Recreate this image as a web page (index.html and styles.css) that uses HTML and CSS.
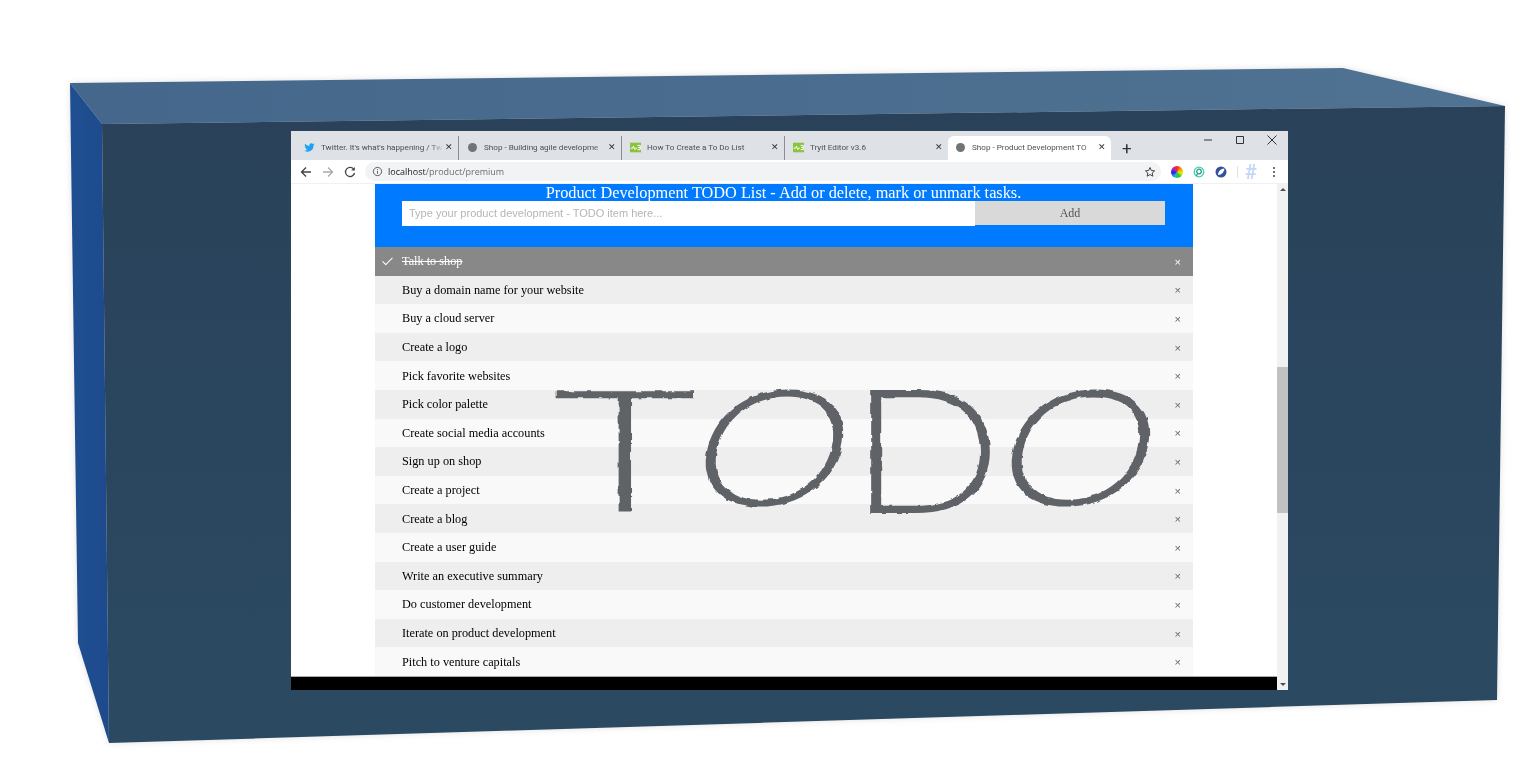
FILE: index.html
```html
<!DOCTYPE html>
<html>
<head>
    <title>Shop - Product Development TODO List</title>
    <link rel="stylesheet" href="styles.css">
</head>
<body>
    <svg class="box" width="1536" height="768" viewBox="0 0 1536 768">
        <defs>
            <linearGradient id="topFace" x1="0" y1="0" x2="1" y2="0">
                <stop offset="0" stop-color="#44678b"/>
                <stop offset="1" stop-color="#507393"/>
            </linearGradient>
            <linearGradient id="sideFace" x1="0" y1="0" x2="1" y2="0">
                <stop offset="0" stop-color="#1f4f92"/>
                <stop offset="1" stop-color="#1d4a8c"/>
            </linearGradient>
            <linearGradient id="frontFace" x1="0" y1="0" x2="0" y2="1">
                <stop offset="0" stop-color="#29425a"/>
                <stop offset="1" stop-color="#2b4a62"/>
            </linearGradient>
            <filter id="rough" x="-10%" y="-10%" width="120%" height="120%">
                <feTurbulence type="fractalNoise" baseFrequency="0.1" numOctaves="2" seed="4"/>
                <feDisplacementMap in="SourceGraphic" scale="4" xChannelSelector="R" yChannelSelector="G"/>
            </filter>
        </defs>
        <polygon points="70,83 1343,68 1505,106 102,124" fill="url(#topFace)"/>
        <polygon points="70,83 102,124 109,743 78,643" fill="url(#sideFace)"/>
        <polygon points="102,124 1505,106 1497,700 109,743" fill="url(#frontFace)"/>
    </svg>

    <div class="window">
        <div class="tabstrip">
            <div class="tab">
                <svg class="favicon" viewBox="0 0 24 24"><path fill="#1da1f2" d="M23 5c-.8.4-1.700.6-2.600.7.900-.6 1.700-1.400 2-2.500-.900.500-1.900.9-2.900 1.100a4.600 4.600 0 0 0-7.900 4.200C7.800 8.300 4.500 6.500 2.200 3.700a4.600 4.600 0 0 0 1.400 6.100c-.7 0-1.400-.2-2-.6 0 2.200 1.600 4.100 3.700 4.600-.7.200-1.400.2-2.100.1.600 1.900 2.300 3.200 4.300 3.200A9.300 9.300 0 0 1 .7 19a13 13 0 0 0 20-11.500c.900-.7 1.700-1.500 2.300-2.500z"/></svg>
                <span class="tab-title">Twitter. It's what's happening / Tw</span>
                <span class="tab-close">✕</span>
            </div>
            <div class="tab">
                <span class="favicon dot"></span>
                <span class="tab-title">Shop - Building agile developme</span>
                <span class="tab-close">✕</span>
            </div>
            <div class="tab">
                <svg class="favicon" viewBox="0 0 16 16"><rect width="16" height="14" y="1" fill="#8ac33e"/><path fill="none" stroke="#fff" stroke-width="1.400" d="M1 9h3l1-3 2 5 1-2h2M11 5h4v3h-3 3v3h-4"/></svg>
                <span class="tab-title">How To Create a To Do List</span>
                <span class="tab-close">✕</span>
            </div>
            <div class="tab">
                <svg class="favicon" viewBox="0 0 16 16"><rect width="16" height="14" y="1" fill="#8ac33e"/><path fill="none" stroke="#fff" stroke-width="1.400" d="M1 9h3l1-3 2 5 1-2h2M11 5h4v3h-3 3v3h-4"/></svg>
                <span class="tab-title">Tryit Editor v3.6</span>
                <span class="tab-close">✕</span>
            </div>
            <div class="tab active">
                <span class="favicon dot"></span>
                <span class="tab-title">Shop - Product Development TO</span>
                <span class="tab-close">✕</span>
            </div>
            <span class="new-tab">+</span>
            <div class="window-controls">
                <svg width="12" height="12" viewBox="0 0 12 12"><path d="M2 6h8" stroke="#333" fill="none"/></svg>
                <svg width="12" height="12" viewBox="0 0 12 12"><path d="M2.500 2.500h7v7h-7z" stroke="#333" fill="none"/></svg>
                <svg width="12" height="12" viewBox="0 0 12 12"><path d="M1.500 1.500l9 9M10.500 1.500l-9 9" stroke="#333" fill="none"/></svg>
            </div>
        </div>

        <div class="toolbar">
            <svg class="nav" viewBox="0 0 12 12"><path d="M11 6H1.500M6 1.500L1.500 6 6 10.500" fill="none" stroke="#444" stroke-width="1.300"/></svg>
            <svg class="nav" viewBox="0 0 12 12"><path d="M1 6h9.500M6 1.500L10.500 6 6 10.500" fill="none" stroke="#aaa" stroke-width="1.300"/></svg>
            <svg class="nav" viewBox="0 0 12 12"><path d="M10 3.500A4.600 4.600 0 1 0 10.600 7" fill="none" stroke="#444" stroke-width="1.300"/><path d="M10.800 1v3.600H7.200z" fill="#444"/></svg>
            <div class="omnibox">
                <svg class="info" viewBox="0 0 12 12"><circle cx="6" cy="6" r="4.500" fill="none" stroke="#555"/><path d="M6 5.300v3.200M6 3.400v1" stroke="#555"/></svg>
                <span class="url"><b>localhost</b>/product/premium</span>
                <svg class="star" viewBox="0 0 24 24"><path d="M12 3l2.700 6 6.500.7-4.900 4.300 1.400 6.400L12 17.100l-5.700 3.300 1.400-6.400L2.800 9.700 9.300 9z" fill="none" stroke="#444" stroke-width="2"/></svg>
            </div>
            <div class="extensions">
                <span class="ext wheel"></span>
                <svg class="ext" viewBox="0 0 12 12"><circle cx="6" cy="6" r="4.800" fill="none" stroke="#35cfa8" stroke-width="1.200"/><circle cx="6" cy="5.500" r="2.300" fill="none" stroke="#1d9a80" stroke-width="1.200"/><path d="M4.500 7.500L3.500 10" stroke="#1d9a80" stroke-width="1.200"/></svg>
                <svg class="ext" viewBox="0 0 12 12"><circle cx="6" cy="6" r="5.500" fill="#34529c"/><path d="M3 9c0-3 2-6 6.500-6.500C9 6 7 9 3 9z" fill="#fff"/></svg>
                <span class="ext-sep"></span>
                <span class="hash">#</span>
                <svg class="kebab" viewBox="0 0 4 12"><circle cx="2" cy="2" r="1" fill="#444"/><circle cx="2" cy="6" r="1" fill="#444"/><circle cx="2" cy="10" r="1" fill="#444"/></svg>
            </div>
        </div>

        <div class="viewport">
            <div class="page">
                <div class="container">
                    <div class="header">
                        <div class="heading">Product Development TODO List - Add or delete, mark or unmark tasks.</div>
                        <div class="add-row">
                            <div class="todo-input">Type your product development - TODO item here...</div>
                            <div class="add-btn">Add</div>
                        </div>
                    </div>
                    <ul class="todo-list">
                        <li class="checked"><span class="done">Talk to shop</span><span class="close">×</span></li>
                        <li>Buy a domain name for your website<span class="close">×</span></li>
                        <li>Buy a cloud server<span class="close">×</span></li>
                        <li>Create a logo<span class="close">×</span></li>
                        <li>Pick favorite websites<span class="close">×</span></li>
                        <li>Pick color palette<span class="close">×</span></li>
                        <li>Create social media accounts<span class="close">×</span></li>
                        <li>Sign up on shop<span class="close">×</span></li>
                        <li>Create a project<span class="close">×</span></li>
                        <li>Create a blog<span class="close">×</span></li>
                        <li>Create a user guide<span class="close">×</span></li>
                        <li>Write an executive summary<span class="close">×</span></li>
                        <li>Do customer development<span class="close">×</span></li>
                        <li>Iterate on product development<span class="close">×</span></li>
                        <li>Pitch to venture capitals<span class="close">×</span></li>
                    </ul>
                </div>
                <div class="black-bar"></div>
            </div>
            <div class="scrollbar">
                <span class="arrow up"></span>
                <div class="track"><div class="thumb"></div></div>
                <span class="arrow down"></span>
            </div>
        </div>
    </div>

    <div class="scrawl">
        <span class="letter t">T</span>
        <span class="letter o1">O</span>
        <span class="letter d">D</span>
        <span class="letter o2">O</span>
    </div>
</body>
</html>
```

FILE: styles.css
```css
html, body {
    margin: 0;
    height: 768px;
    overflow: hidden;
    background: #fff;
}
.box {
    position: absolute;
    left: 0;
    top: 0;
    filter: drop-shadow(0 0 3px rgba(0, 0, 0, 0.12));
}
.window {
    position: absolute;
    left: 291px;
    top: 131px;
    width: 997px;
    height: 559px;
    display: flex;
    flex-direction: column;
    background: #fff;
    font-family: Roboto, sans-serif;
    filter: blur(0.35px);
}
.tabstrip {
    height: 29px;
    padding-left: 5px;
    display: flex;
    align-items: flex-end;
    background: #dee1e6;
    box-sizing: border-box;
}
.tab {
    width: 163px;
    height: 24px;
    padding: 0 3px 2px 8px;
    box-sizing: border-box;
    display: flex;
    align-items: center;
    font-size: 8.1px;
    color: #4c4f54;
    border-right: 1px solid #8a8d91;
}
.tab.active {
    padding-left: 7px;
    background: #fff;
    border-right: none;
    border-radius: 6px 6px 0 0;
}
.tab:nth-child(4) {
    border-right: none;
}
.favicon {
    width: 11px;
    height: 11px;
    margin-right: 6px;
    flex: none;
}
.dot {
    width: 9px;
    height: 9px;
    margin-left: 1px;
    margin-right: 7px;
    border-radius: 50%;
    background: #707478;
}
.tab-title {
    flex: 1;
    overflow: hidden;
    white-space: nowrap;
    -webkit-mask-image: linear-gradient(to right, #000 90%, transparent);
    mask-image: linear-gradient(to right, #000 90%, transparent);
}
.tab-close {
    flex: none;
    font-size: 9px;
    color: #333;
    width: 12px;
    text-align: center;
}
.new-tab {
    margin: 0 0 2px 11px;
    font-size: 17px;
    line-height: 20px;
    color: #333;
}
.window-controls {
    margin-left: auto;
    align-self: flex-start;
    display: flex;
    gap: 20px;
    padding: 3px 10px 0 0;
}
.toolbar {
    height: 24px;
    display: flex;
    align-items: center;
    padding-left: 9px;
    box-sizing: border-box;
    background: #fff;
    border-bottom: 1px solid #f0f0f0;
}
.nav {
    width: 12px;
    height: 12px;
    margin-right: 10px;
    flex: none;
}
.omnibox {
    width: 796px;
    height: 19px;
    margin-left: -1px;
    padding: 0 5px 0 7px;
    box-sizing: border-box;
    display: flex;
    align-items: center;
    gap: 5px;
    border-radius: 10px;
    background: #f1f3f4;
    font-family: "Open Sans", sans-serif;
    font-size: 9px;
    color: #6b6e72;
}
.info {
    width: 11px;
    height: 11px;
}
.url b {
    font-weight: 400;
    color: #222;
}
.star {
    width: 12px;
    height: 12px;
    margin-left: auto;
}
.extensions {
    flex: 1;
    display: flex;
    align-items: center;
    gap: 10px;
    padding-left: 10px;
}
.ext {
    width: 12px;
    height: 12px;
    flex: none;
}
.wheel {
    border-radius: 50%;
    background: conic-gradient(#f22, #f90, #ee0, #2c2, #2bd, #22d, #a2c, #f22);
}
.ext-sep {
    width: 1px;
    height: 12px;
    background: #e2e2e2;
}
.hash {
    width: 14px;
    margin-left: -4px;
    font-size: 20px;
    font-weight: 700;
    line-height: 18px;
    text-align: center;
    color: #c4d7f4;
}
.kebab {
    width: 4px;
    height: 12px;
    margin-left: 4px;
}
.viewport {
    flex: 1;
    display: flex;
    min-height: 0;
}
.page {
    flex: 1;
    display: flex;
    flex-direction: column;
    background: #fff;
}
.container {
    flex: 1;
    margin: 0 84px;
    overflow: hidden;
    font-family: "Liberation Serif", serif;
}
.header {
    height: 63px;
    padding: 0 28px 0 27px;
    background: #007bff;
    color: #fff;
}
.heading {
    font-size: 16.3px;
    line-height: 17px;
    text-align: center;
    white-space: nowrap;
}
.add-row {
    display: flex;
    align-items: flex-start;
}
.todo-input {
    width: 573px;
    height: 25px;
    padding-left: 7px;
    box-sizing: border-box;
    background: #fff;
    color: #b5b5b5;
    font: 11px/25px "Liberation Sans", sans-serif;
}
.add-btn {
    flex: 1;
    height: 24px;
    background: #d9d9d9;
    color: #555;
    font-size: 12px;
    line-height: 24px;
    text-align: center;
}
.todo-list {
    list-style: none;
    margin: 0;
    padding: 0;
}
.todo-list li {
    height: 28.6px;
    padding: 1px 12px 0 27px;
    box-sizing: border-box;
    display: flex;
    align-items: center;
    justify-content: space-between;
    position: relative;
    font-size: 12.27px;
    color: #000;
    background: #f9f9f9;
}
.todo-list li:nth-child(even) {
    background: #eee;
}
.todo-list li.checked {
    background: #888;
    color: #fff;
}
.done {
    text-decoration: line-through;
}
.todo-list li.checked::before {
    content: "";
    position: absolute;
    left: 10px;
    top: 8px;
    width: 4px;
    height: 9px;
    border: solid #fff;
    border-width: 0 1.5px 1.5px 0;
    transform: rotate(45deg);
}
.close {
    color: #666;
    font-family: "Liberation Sans", sans-serif;
    font-size: 11px;
}
.checked .close {
    color: #fff;
}
.black-bar {
    height: 14px;
    background: #000;
    border-top: 1px solid #aaa;
    box-sizing: border-box;
}
.scrollbar {
    width: 11px;
    display: flex;
    flex-direction: column;
    background: #f1f1f1;
}
.track {
    flex: 1;
    padding-top: 172px;
}
.thumb {
    height: 146px;
    background: #c1c1c1;
}
.arrow {
    height: 11px;
    display: flex;
    align-items: center;
    justify-content: center;
}
.arrow::before {
    content: "";
    border: 3px solid transparent;
}
.arrow.up::before {
    border-bottom-color: #505050;
    border-top-width: 0;
}
.arrow.down::before {
    border-top-color: #505050;
    border-bottom-width: 0;
}

/* hand drawn word lying over the list */
.scrawl {
    position: absolute;
    left: 555px;
    top: 350px;
    width: 610px;
    height: 190px;
    font: 200 172px/190px Inter, sans-serif;
    color: #5e6367;
    filter: url(#rough);
}
.letter {
    position: absolute;
    top: 0;
    transform-origin: center;
}
.t {
    left: 16px;
    transform: translateY(6px) scale(1.575, 0.96);
}
.o1 {
    left: 155px;
    transform: translateY(3px) skewX(-14deg) scale(1.26, 0.91);
}
.d {
    left: 310px;
    transform: translateY(6px) scale(1.27, 0.98);
}
.o2 {
    left: 461px;
    transform: translateY(3px) skewX(-14deg) scale(1.26, 0.91);
}
```
